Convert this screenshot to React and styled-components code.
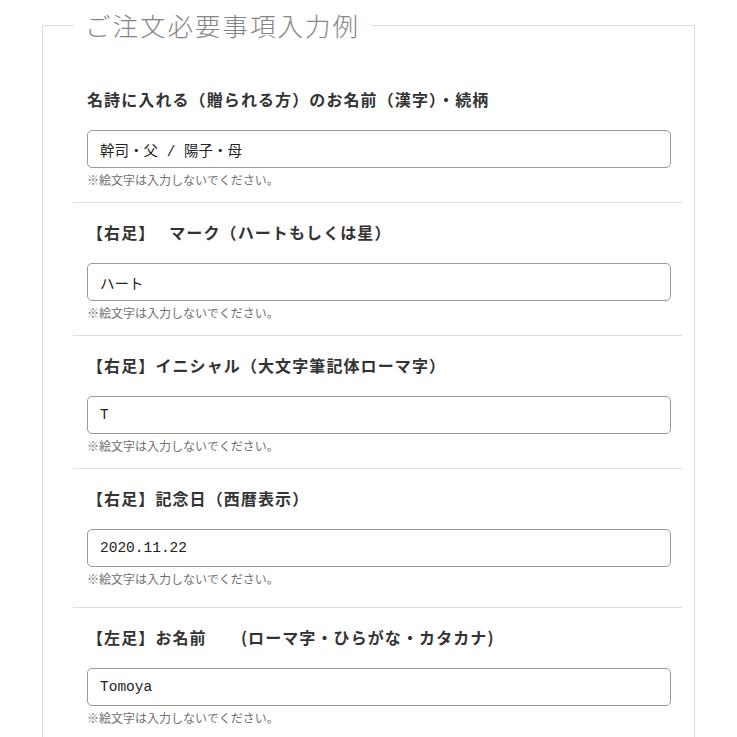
import React from "react";
import styled, { createGlobalStyle } from "styled-components";

const Global = createGlobalStyle`
  html, body { margin: 0; padding: 0; background: #fff; }
  body { font-family: "Noto Sans CJK JP", "Noto Sans", sans-serif; color: #333; }
`;

const Frame = styled.fieldset`
  box-sizing: border-box;
  width: 653px;
  margin: 8px 0 0 42px;
  padding: 28px 12px 0 30px;
  border: 1px solid #dcdcdc;
  border-bottom: none;
  min-height: 760px;
`;

const Legend = styled.legend`
  margin-left: 1px;
  padding: 0 11px;
  font-family: "Noto Sans CJK JP", sans-serif;
  font-weight: 300;
  font-size: 25.5px;
  line-height: 34px;
  letter-spacing: 2px;
  color: #858585;
`;

const Section = styled.div`
  padding: 17px 10px ${(p) => p.$bottom ?? 14}px 14px;
  border-bottom: ${(p) => (p.$last ? "none" : "1px solid #dedede")};
  display: flex;
  flex-direction: column;
`;

const Label = styled.div`
  font-weight: 700;
  font-size: 16px;
  line-height: 24px;
  letter-spacing: 1.1px;
  color: #333;
  white-space: pre;
`;

const Field = styled.input`
  box-sizing: border-box;
  margin-top: 19px;
  width: 584px;
  height: 38px;
  padding: 0 12px;
  border: 1px solid #9a9a9a;
  border-radius: 5px;
  background: #fff;
  font-family: "Liberation Mono", "Noto Sans CJK JP", monospace;
  font-size: 14.5px;
  color: #222;
  outline: none;
`;

const Note = styled.div`
  margin-top: 4px;
  font-size: 12px;
  line-height: 16px;
  color: #707070;
`;

const items = [
  { label: "名詩に入れる（贈られる方）のお名前（漢字）・続柄", value: "幹司・父 / 陽子・母" },
  { label: "【右足】　 マーク（ハートもしくは星）", value: "ハート" },
  { label: "【右足】イニシャル（大文字筆記体ローマ字）", value: "T" },
  { label: "【右足】記念日（西暦表示）", value: "2020.11.22", bottom: 20 },
  { label: "【左足】お名前　　(ローマ字・ひらがな・カタカナ)", value: "Tomoya", last: true },
];

export default function App() {
  return (
    <>
      <Global />
      <Frame>
        <Legend>ご注文必要事項入力例</Legend>
        {items.map((it, i) => (
          <Section key={i} $last={it.last} $bottom={it.bottom}>
            <Label>{it.label}</Label>
            <Field type="text" readOnly value={it.value} />
            <Note>※絵文字は入力しないでください。</Note>
          </Section>
        ))}
      </Frame>
    </>
  );
}
